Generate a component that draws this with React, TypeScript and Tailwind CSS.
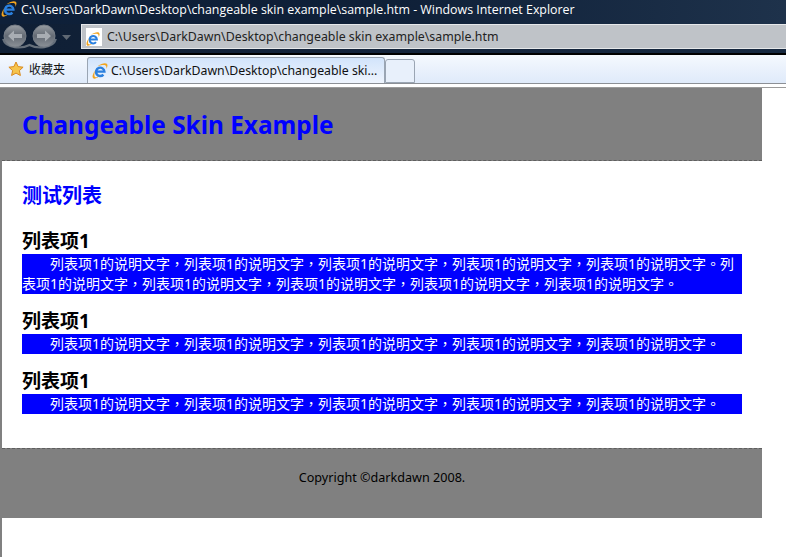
function IeIcon({ size = 16 }: { size?: number }) {
  return (
    <svg width={size} height={size} viewBox="0 0 16 16" className="shrink-0">
      <path d="M4.800 8.600h7.600A4.200 4.200 0 1 0 11.400 11.600" fill="none" stroke="#2b80de" strokeWidth="2.400" />
      <path d="M3 7.500C.5 11.200 0 14.300 1.200 15.300c1.200.9 3.500 0 5.600-1.500-1.800.5-3.400.6-4-.1-.7-.8-.5-2.900.2-6.200z" fill="#f2a51f" />
      <path d="M5.500 3.200C9 .8 13.200-.6 14.800.8c1.100 1 .8 3-.4 5.100.2-1.500 0-2.900-.8-3.400-1.400-.9-4.600-.3-8.100.7z" fill="#f2a51f" />
    </svg>
  );
}

function NavButtons() {
  return (
    <svg width="76" height="27" viewBox="0 0 76 27" className="shrink-0">
      <defs>
        <linearGradient id="glass" x1="0" y1="0" x2="0" y2="1">
          <stop offset="0" stopColor="#989da3" />
          <stop offset="0.5" stopColor="#646b74" />
          <stop offset="1" stopColor="#8b9198" />
        </linearGradient>
      </defs>
      <path d="M3 15c3 10 19 10 26.500 6 7.500 4 23.500 4 26.500-6" fill="none" stroke="#66707b" strokeWidth="2" />
      <circle cx="15" cy="12" r="11" fill="url(#glass)" stroke="#767d86" />
      <circle cx="44" cy="12" r="11" fill="url(#glass)" stroke="#767d86" />
      <path d="M8 12l6-5.500V10h8v4h-8v3.500z" fill="#a8adb3" />
      <path d="M51 12l-6-5.500V10h-8v4h8v3.500z" fill="#a8adb3" />
      <path d="M62 11h9l-4.500 5z" fill="#5f6873" />
    </svg>
  );
}

function FavStar() {
  return (
    <svg width="16" height="16" viewBox="0 0 16 16" className="shrink-0">
      <path d="M8 1l2.100 4.600 5 .6-3.700 3.400 1 4.900L8 12.100l-4.400 2.400 1-4.900L.9 6.200l5-.6z" fill="#f6c44c" stroke="#d98a1e" strokeLinejoin="round" />
    </svg>
  );
}

function PageIcon() {
  return (
    <div className="w-[16px] h-[18px] bg-white flex items-end shrink-0">
      <IeIcon size={14} />
    </div>
  );
}

export default function App() {
  const desc = '列表项1的说明文字，列表项1的说明文字，列表项1的说明文字，列表项1的说明文字，列表项1的说明文字。';
  const items = [desc + desc, desc, desc];

  return (
    <div className="w-[786px] h-[557px] overflow-hidden bg-white flex flex-col font-['Noto_Sans','Noto_Sans_CJK_SC',sans-serif]">
      <div className="h-[24px] shrink-0 bg-gradient-to-r from-[#0e2039] via-[#0f2038] to-[#1e324b] flex items-start pl-[1px] pt-[1px] gap-[4px] font-['Open_Sans',sans-serif] text-[12.4px] leading-[18px] text-white">
        <IeIcon />
        <span className="whitespace-nowrap">C:\Users\DarkDawn\Desktop\changeable skin example\sample.htm - Windows Internet Explorer</span>
      </div>

      <div className="h-[31px] shrink-0 bg-gradient-to-r from-[#0f1f35] via-[#14243b] to-[#16283f] border-b-2 border-black flex items-start">
        <NavButtons />
        <div className="ml-[5px] flex-1 h-[25px] bg-[#bfc3c8] border border-[#e6e8ea] border-r-0 flex items-center pl-[4px] gap-[5px] text-[12.35px] text-[#222]">
          <PageIcon />
          <span className="whitespace-nowrap pt-[1px]">C:\Users\DarkDawn\Desktop\changeable skin example\sample.htm</span>
        </div>
      </div>

      <div className="h-[29px] shrink-0 bg-gradient-to-b from-[#f5f9fe] to-[#dfeafa] border-b border-[#8c9096] flex items-end pl-[8px] text-[12px] text-[#111]">
        <div className="flex items-center gap-[5px] h-[28px] w-[79px]">
          <FavStar />
          <span className="pt-[1px]">收藏夹</span>
        </div>
        <div className="w-[298px] h-[26px] rounded-t-[3px] border border-b-0 border-[#9aa5b3] bg-gradient-to-b from-[#d2e4fb] to-[#eef4fd] flex items-center pl-[4px] gap-[3px] text-[12.3px]">
          <IeIcon />
          <span className="whitespace-nowrap pt-[1px]">C:\Users\DarkDawn\Desktop\changeable ski...</span>
        </div>
        <div className="w-[30px] h-[24px] rounded-t-[3px] border border-[#9aa5b3] bg-[#e8f0fb]" />
      </div>

      <div className="h-[4px] shrink-0 bg-white border-b border-[#9b9b9b]" />

      <div className="flex-1 border-l-2 border-[#808080] w-[762px]">
        <div className="h-[73px] bg-[#808080] border-b border-dashed border-[#5f5f5f] pl-[20px] pt-[2px] flex items-center">
          <h1 className="text-[24.4px] font-bold text-[#0000ff]">Changeable Skin Example</h1>
        </div>

        <div className="px-[20px] pt-[21px] h-[287px]">
          <h2 className="text-[20px] font-bold text-[#0000ff] leading-[28px] mb-[18px]">测试列表</h2>
          {items.map((text, i) => (
            <div key={i} className="mb-[14px]">
              <h3 className="text-[19px] font-bold text-black leading-[26px]">列表项1</h3>
              <p className="bg-[#0000ff] text-white text-[14px] leading-[20px] indent-[2em] font-['Noto_Sans','Noto_Sans_CJK_TC',sans-serif]">{text}</p>
            </div>
          ))}
        </div>

        <div className="h-[70px] bg-[#808080] border-t border-dashed border-[#5f5f5f] pt-[20px] text-center text-[12.6px] leading-[18px] text-black">
          Copyright ©darkdawn 2008.
        </div>
      </div>
    </div>
  );
}
